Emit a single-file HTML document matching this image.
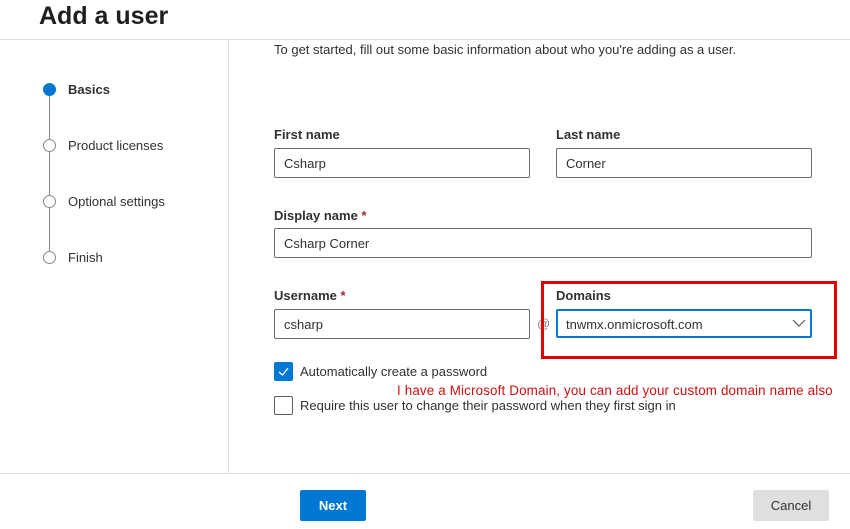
<!DOCTYPE html>
<html><head><style>
*{margin:0;padding:0;box-sizing:border-box}
body{width:850px;height:529px;background:#fff;font-family:"Liberation Sans",sans-serif;color:#323130;position:relative;overflow:hidden}
.a{position:absolute}
h1{position:absolute;left:39px;top:2px;font-size:25px;font-weight:bold;color:#201f1e}
.lbl{position:absolute;font-size:13px;font-weight:bold;color:#323130}
.lbl span{color:#a4262c}
.in{position:absolute;border:1px solid #6e6c6a;border-radius:2px;height:30px;font-size:13px;padding:7px 0 0 9px;color:#323130}
.c{position:absolute;left:43px;width:13px;height:13px;border:1.5px solid #8a8886;border-radius:50%;background:#fff}
.st{position:absolute;left:68px;font-size:13px;color:#323130}
.cb{position:absolute;left:274px;width:19px;height:19px;border:1px solid #605e5c;border-radius:2px}
</style></head><body>
<h1>Add a user</h1>
<div class="a" style="left:0;top:39px;width:850px;height:1px;background:#e1dfdd"></div>
<div class="a" style="left:228px;top:40px;width:1px;height:433px;background:#e1dfdd"></div>
<div class="a" style="left:0;top:473px;width:850px;height:1px;background:#e1dfdd"></div>
<div class="a" style="left:49px;top:95px;width:1px;height:160px;background:#8a8886"></div>
<div class="c" style="top:83px;background:#0078d4;border-color:#0078d4"></div>
<div class="c" style="top:139px"></div>
<div class="c" style="top:195px"></div>
<div class="c" style="top:251px"></div>
<div class="st" style="top:82px;font-weight:bold">Basics</div>
<div class="st" style="top:138px">Product licenses</div>
<div class="st" style="top:194px">Optional settings</div>
<div class="st" style="top:250px">Finish</div>
<div class="a" style="left:274px;top:42px;font-size:13px">To get started, fill out some basic information about who you're adding as a user.</div>
<div class="lbl" style="left:274px;top:127px">First name</div>
<div class="lbl" style="left:556px;top:127px">Last name</div>
<div class="in" style="left:274px;top:148px;width:256px">Csharp</div>
<div class="in" style="left:556px;top:148px;width:256px">Corner</div>
<div class="lbl" style="left:274px;top:208px">Display name <span>*</span></div>
<div class="in" style="left:274px;top:228px;width:538px">Csharp Corner</div>
<div class="lbl" style="left:274px;top:288px">Username <span>*</span></div>
<div class="in" style="left:274px;top:309px;width:256px">csharp</div>
<div class="a" style="left:537px;top:316px;font-size:13px;color:#8a8886">@</div>
<div class="a" style="left:541px;top:281px;width:296px;height:78px;border:3px solid #e00000"></div>
<div class="lbl" style="left:556px;top:288px">Domains</div>
<div class="in" style="left:556px;top:309px;width:256px;height:29px;border:2px solid #0078d4;padding-top:6px;padding-left:8px">tnwmx.onmicrosoft.com</div>
<svg class="a" style="left:792px;top:318px" width="14" height="10"><path d="M1 2 L7 8 L13 2" fill="none" stroke="#605e5c" stroke-width="1.2"/></svg>
<div class="cb" style="top:362px;background:#0078d4;border-color:#0078d4"><svg width="17" height="17"><path d="M4 9 L7.5 12 L13 5" fill="none" stroke="#fff" stroke-width="1.3"/></svg></div>
<div class="a" style="left:300px;top:364px;font-size:13px">Automatically create a password</div>
<div class="a" style="left:397px;top:383px;font-size:13.4px;letter-spacing:0.15px;color:#d01010">I have a Microsoft Domain, you can add your custom domain name also</div>
<div class="cb" style="top:396px"></div>
<div class="a" style="left:300px;top:398px;font-size:13px">Require this user to change their password when they first sign in</div>
<div class="a" style="left:300px;top:490px;width:66px;height:31px;background:#0078d4;border-radius:2px;color:#fff;font-size:13px;font-weight:bold;text-align:center;line-height:31px">Next</div>
<div class="a" style="left:753px;top:490px;width:76px;height:31px;background:#e1dfdd;border-radius:2px;color:#323130;font-size:13px;text-align:center;line-height:31px">Cancel</div>
</body></html>
